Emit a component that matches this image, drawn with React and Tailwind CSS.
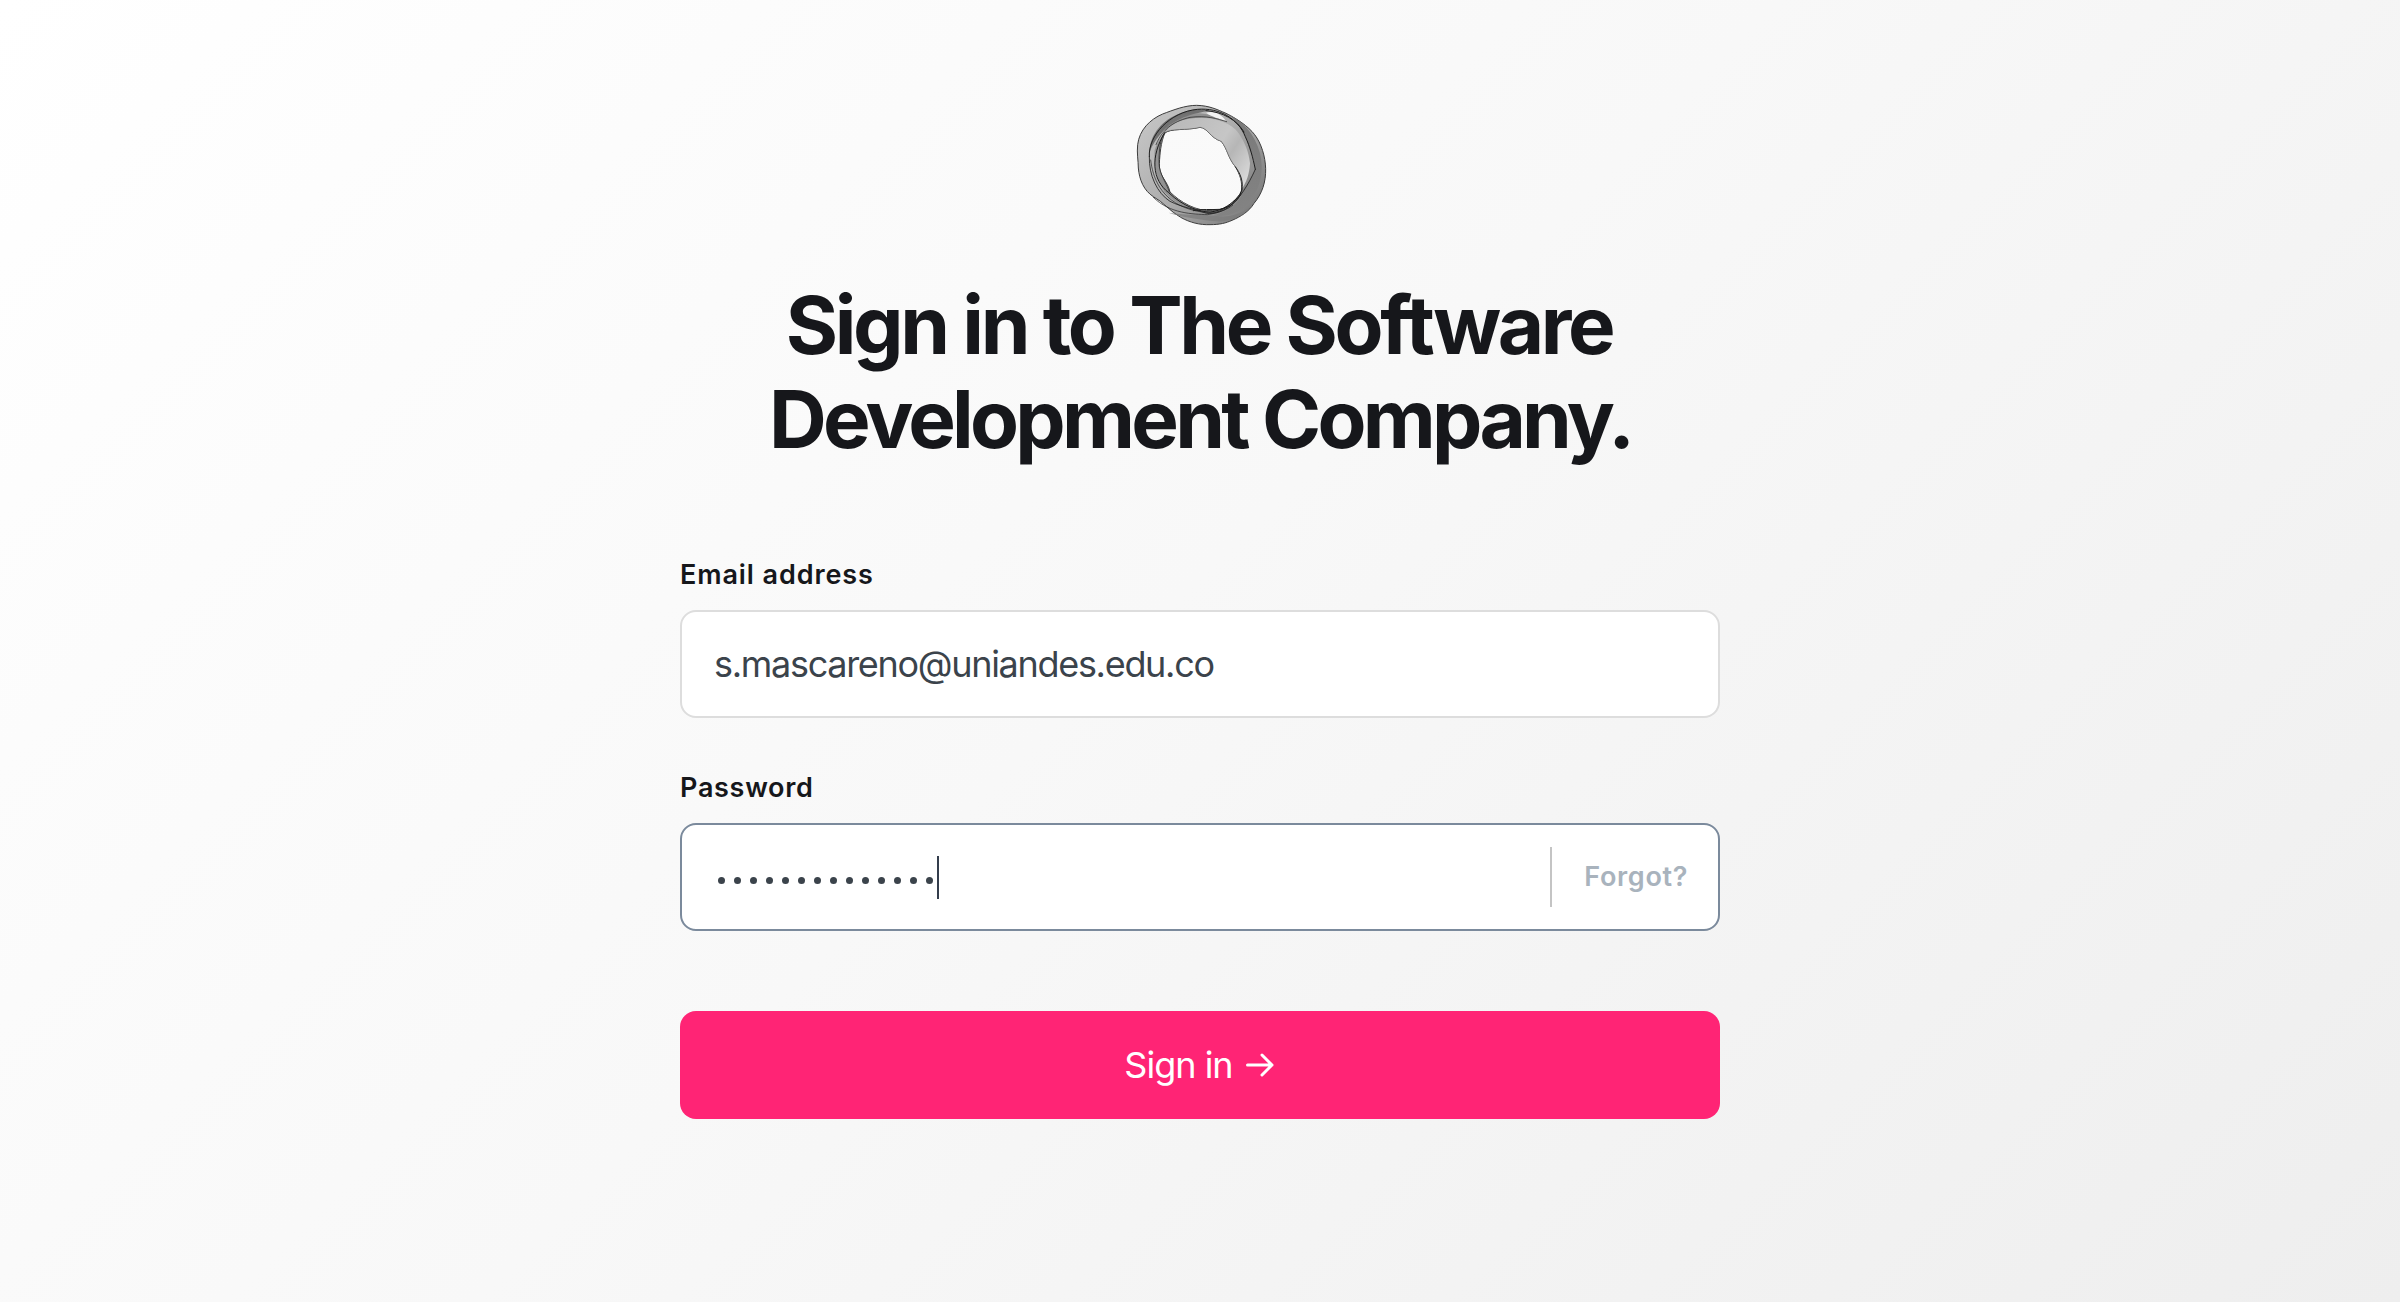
function Logo() {
  return (
    <svg className="h-[150px] w-[160px]" viewBox="0 0 480 450" fill="none" aria-label="The Software Development Company">
      <defs>
        <linearGradient id="ringShade" x1="60" y1="80" x2="420" y2="380" gradientUnits="userSpaceOnUse">
          <stop offset="0" stopColor="#c6c6c6" />
          <stop offset="0.5" stopColor="#acacac" />
          <stop offset="1" stopColor="#777777" />
        </linearGradient>
        <linearGradient id="sheet" x1="150" y1="100" x2="390" y2="260" gradientUnits="userSpaceOnUse">
          <stop offset="0" stopColor="#b9b9b9" />
          <stop offset="0.55" stopColor="#c6c6c6" />
          <stop offset="0.7" stopColor="#b6b6b6" />
          <stop offset="1" stopColor="#dadada" />
        </linearGradient>
        <linearGradient id="fold" x1="200" y1="60" x2="400" y2="380" gradientUnits="userSpaceOnUse">
          <stop offset="0" stopColor="#6e6e6e" />
          <stop offset="0.5" stopColor="#777777" />
          <stop offset="1" stopColor="#858585" />
        </linearGradient>
      </defs>
      <path
        fillRule="evenodd"
        fill="url(#ringShade)"
        stroke="#3c3c3c"
        strokeWidth="3"
        d="M230 46C195 46 160 60 128 72C90 88 58 120 53 164C50 190 55 212 55 234C58 270 72 302 100 320C130 336 150 364 182 382C210 398 240 405 270 404C300 404 318 399 336 391C362 380 388 364 402 340C426 312 438 276 437 236C436 200 424 160 404 134C384 108 350 86 318 70C290 58 268 47 230 46ZM240 112C264 114 268 142 304 154C324 180 322 200 346 230C360 254 368 276 364 304C358 330 324 362 278 361C230 366 180 336 150 306C142 270 116 260 118 220C120 190 122 160 134 130C150 114 200 122 240 112Z"
      />
      <path fill="url(#sheet)" d="M134 128C160 92 200 84 240 84C290 84 336 100 356 130C376 160 386 186 390 220C388 252 380 276 366 296C368 270 358 250 346 230C322 200 324 180 304 154C268 142 264 114 240 112C200 122 150 114 134 128Z" />
      <path fill="url(#fold)" fillOpacity="0.85" d="M318 70C346 86 372 122 388 176C398 200 405 220 406 238C396 266 380 290 366 300C370 330 330 364 280 376C320 384 370 366 392 330C424 290 432 240 420 190C404 130 366 90 318 70Z" />
      <path fill="#5c5c5c" fillOpacity="0.8" d="M88 190C88 140 120 96 170 74C206 58 240 54 270 62C220 70 160 84 124 130C104 152 92 176 88 190Z" />
      <path fill="#777" fillOpacity="0.6" d="M160 84C200 66 260 60 320 96C300 80 230 78 190 90C160 98 146 112 134 128C136 112 146 96 160 84Z" />
      <path fill="#8a8a8a" fillOpacity="0.8" d="M104 180C112 156 122 140 134 128C118 170 116 200 118 230C124 262 142 280 148 306C180 336 220 358 270 366C220 366 170 346 134 306C112 270 100 230 104 180Z" />
      <path fill="#7a7a7a" fillOpacity="0.7" d="M146 368C190 376 240 372 290 378C330 384 370 370 392 348C370 382 320 396 290 394C230 388 180 380 146 368Z" />
      <path fill="#f2f2f2" d="M258 68C280 62 302 70 318 93C300 87 274 80 258 68Z" />
      <g stroke="#1e1e1e" strokeWidth="3" strokeLinecap="round">
        <path d="M88 200C84 136 150 66 232 58C300 52 356 88 376 140C390 170 398 200 406 238" />
        <path d="M88 200C86 256 112 310 150 334C186 352 220 356 260 370C310 376 360 340 406 238" strokeWidth="2.5" />
        <path d="M134 128C90 200 96 270 146 308C190 350 240 366 270 366C300 364 350 340 366 300C370 270 360 250 346 230" />
        <path d="M346 230C322 200 324 180 304 154C268 142 264 114 240 112C200 122 150 114 134 128" strokeWidth="1.5" stroke="#666" />
        <path d="M134 128C116 150 116 210 118 230C124 262 140 280 148 306" strokeWidth="2" />
        <path d="M92 210C98 260 120 330 210 358C260 374 310 370 338 346" strokeWidth="2" />
        <path d="M100 322C150 372 220 372 262 374C300 370 340 340 362 310" strokeWidth="2" />
        <path d="M220 362C250 356 270 360 300 358C330 352 348 336 362 314" strokeWidth="3" />
        <path d="M108 164C130 110 170 92 210 82C260 76 290 86 320 95" strokeWidth="2" />
        <path d="M258 62C310 66 350 90 372 126" strokeWidth="3" />
      </g>
    </svg>
  );
}

function Field({ label, labelClass, focused, children }) {
  return (
    <div>
      <div className={`h-[31px] pt-px text-[27px] leading-[30px] font-semibold text-[#16171b] ${labelClass}`}>{label}</div>
      <div
        className={
          focused
            ? "mt-[20px] flex h-[108px] items-center rounded-[16px] border-2 border-[#7b8a9c] bg-white pl-[32px]"
            : "mt-[20px] flex h-[108px] items-center rounded-[16px] border-2 border-[#dddddd] bg-white pl-[32px]"
        }
      >
        {children}
      </div>
    </div>
  );
}

export default function App() {
  return (
    <main className="flex h-[1302px] w-full flex-col items-center overflow-hidden bg-[linear-gradient(135deg,#ffffff_0%,#f8f8f8_48%,#eeeeee_100%)] pt-[90px] font-['Inter','Liberation_Sans',sans-serif]">
      <Logo />
      <h1 className="mt-[38px] text-center text-[80px] leading-[94px] font-bold whitespace-nowrap text-[#16171b]">
        <span className="mr-[2px] tracking-[-3.35px]">Sign in to The Software</span>
        <br />
        <span className="tracking-[-3.75px]">Development Company.</span>
      </h1>
      <form className="mt-[93px] w-[1040px]">
        <Field label="Email address" labelClass="tracking-[0.9px]">
          <span className="text-[36px] leading-[44px] tracking-[-1.3px] text-[#3b434b]">s.mascareno@uniandes.edu.co</span>
        </Field>
        <div className="mt-[54px]">
          <Field label="Password" labelClass="tracking-[0.7px]" focused>
            <div className="mt-[7px] flex items-center gap-[9px] pl-[4px]">
              {Array.from({ length: 14 }, (_, i) => (
                <span key={i} className="size-[7px] rounded-full bg-[#3b434b]" />
              ))}
            </div>
            <span className="ml-[4px] h-[43px] w-[2px] bg-[#343d4c]" />
            <span className="ml-auto h-[60px] w-[2px] bg-[#c4c4c4]" />
            <span className="mr-[30px] ml-[32px] text-[27px] leading-[32px] font-semibold tracking-[0.65px] text-[#a9b3bd]">Forgot?</span>
          </Field>
        </div>
        <button type="button" className="mt-[80px] flex h-[108px] w-full items-center justify-center rounded-[16px] bg-[#ff2475] pr-[2px] text-[36px] text-white">
          <span className="tracking-[-1px]">Sign in</span>
          <svg className="ml-[13px] h-[26px] w-[28px]" viewBox="0 0 28 26" fill="none" stroke="currentColor" strokeWidth="3" strokeLinecap="round" strokeLinejoin="round">
            <path d="M1.5 13H26M16 3L26 13L16 23" />
          </svg>
        </button>
      </form>
    </main>
  );
}
